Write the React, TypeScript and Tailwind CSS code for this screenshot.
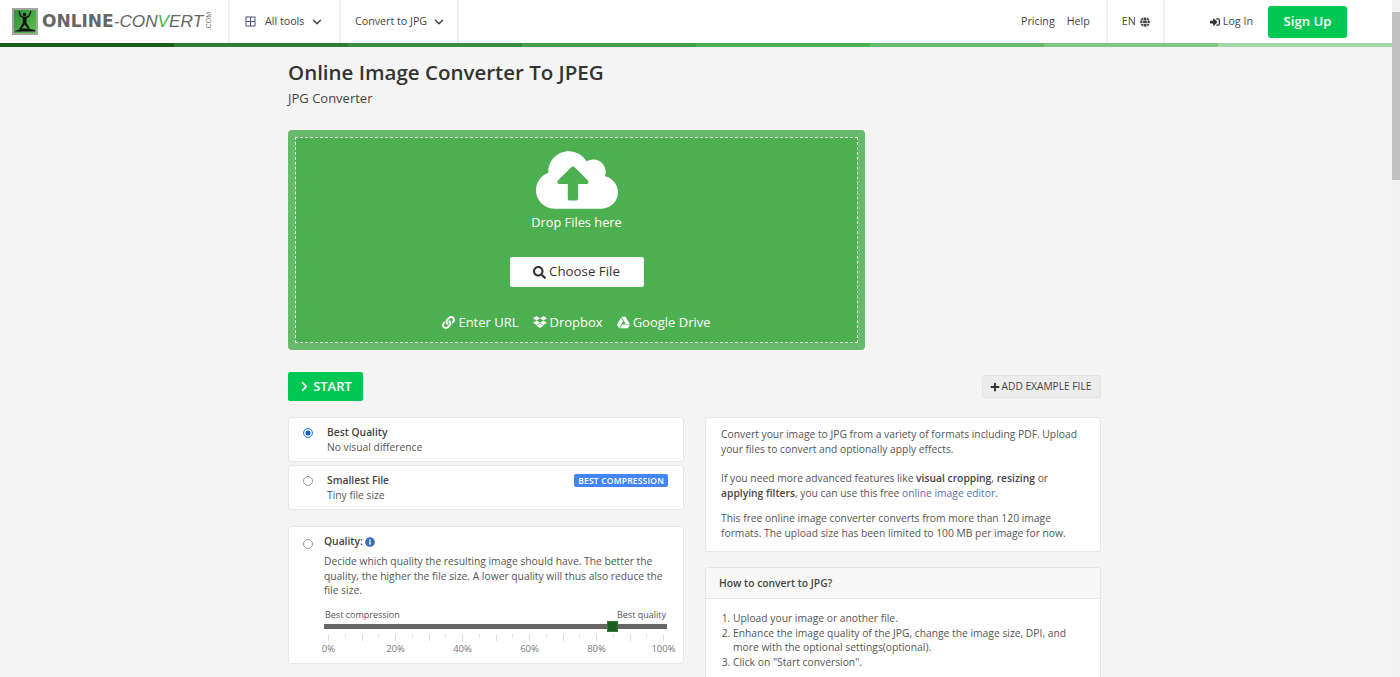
import React from 'react';
import { ChevronDown } from 'lucide-react';
import {
  FaCloudUploadAlt,
  FaSearch,
  FaLink,
  FaDropbox,
  FaGoogleDrive,
  FaChevronRight,
  FaPlus,
  FaInfoCircle,
  FaGlobe,
  FaSignInAlt,
} from 'react-icons/fa';

const barColors = ['bg-[#1b5e20]', 'bg-[#2e7d32]', 'bg-[#388e3c]', 'bg-[#43a047]', 'bg-[#4caf50]', 'bg-[#66bb6a]', 'bg-[#81c784]', 'bg-[#a5d6a7]'];
const ticks = Array.from({ length: 21 }, (_, i) => i);
const tickLabels = ['0%', '20%', '40%', '60%', '80%', '100%'];

const Logo = () => (
  <div className="flex items-center pl-[12px] w-[228px] h-full">
    <svg width="26" height="27" viewBox="0 0 26 27" className="shrink-0">
      <defs>
        <linearGradient id="logoGreen" x1="0" y1="0" x2="1" y2="1">
          <stop offset="0" stopColor="#2f8f3a" />
          <stop offset="1" stopColor="#5cc24a" />
        </linearGradient>
      </defs>
      <rect width="26" height="27" fill="#a3a3a3" />
      <rect x="2" y="2" width="22" height="23" fill="url(#logoGreen)" />
      <circle cx="12.5" cy="6.5" r="1.7" fill="#111" />
      <path d="M7 3l1.5 5 3 1.5h2.5L17 8l2-5" fill="none" stroke="#111" strokeWidth="1.4" />
      <path d="M10.8 9h4l-.4 6 3.6 5.5h-2.2l-3-4-3.4 4.500H7l3.800-6z" fill="#111" />
      <path d="M3 23l7-2.500h6l7 1.500v1.500H3z" fill="#111" />
    </svg>
    <span className="ml-[4px] font-['DejaVu_Sans',sans-serif] font-bold text-[17px] text-[#666] leading-none">ONLINE</span>
    <span className="font-['Liberation_Sans',sans-serif] italic text-[17.2px] text-[#666] leading-none">
      -CON<span className="text-[#3fb34f]">V</span>ERT
    </span>
    <span className="[writing-mode:vertical-rl] rotate-180 text-[7px] leading-none text-[#777] font-['Liberation_Sans',sans-serif] ml-[2px]">.COM</span>
  </div>
);

const Header = () => (
  <header className="bg-white h-[43px] flex items-stretch text-[#444] text-[10.7px]">
    <Logo />
    <div className="w-[111px] border-l-2 border-[#f0f0f0] flex items-center pl-[15px]">
      <svg width="11" height="11" viewBox="0 0 11 11" fill="none" stroke="#4a5578" strokeWidth="1" className="mr-[9px]">
        <rect x="1" y="1" width="9" height="9" />
        <path d="M5.5 1v9M1 5.5h9" />
      </svg>
      <span>All tools</span>
      <ChevronDown size={14} strokeWidth={2.5} className="ml-[6px] text-[#444]" />
    </div>
    <div className="w-[120px] border-l-2 border-r-2 border-[#f0f0f0] flex items-center pl-[14px]">
      <span>Convert to JPG</span>
      <ChevronDown size={14} strokeWidth={2.5} className="ml-[5px] text-[#444]" />
    </div>
    <div className="flex-1 flex items-center justify-end gap-[12px] pr-[16px]">
      <span>Pricing</span>
      <span>Help</span>
    </div>
    <div className="w-[59px] border-l-2 border-r-2 border-[#f0f0f0] flex items-center pl-[14px] gap-[4px]">
      <span>EN</span>
      <FaGlobe size={10} className="text-[#444]" />
    </div>
    <div className="w-[45px]" />
    <div className="flex items-center gap-[3px]">
      <FaSignInAlt size={10} className="text-[#333]" />
      <span>Log In</span>
    </div>
    <div className="flex items-center pl-[15px] pr-[45px]">
      <button className="w-[79px] h-[32px] bg-[#00c853] rounded-[3px] text-white text-[13.2px] font-semibold">Sign Up</button>
    </div>
  </header>
);

const Dropzone = () => (
  <div className="mt-[23px] w-[577px] h-[220px] bg-[#66bb6a] rounded-[4px] p-[7px]">
    <div className="h-full bg-[#4caf50] border border-dashed border-white flex flex-col items-center text-white">
      <FaCloudUploadAlt size={82} className="mt-[1px]" />
      <div className="mt-[-7px] text-[12.8px] leading-[17px]">Drop Files here</div>
      <button className="mt-[26px] w-[134px] h-[30px] bg-white rounded-[2px] text-[#333] text-[13.3px] flex items-center justify-center gap-[3px]">
        <FaSearch size={13} />
        Choose File
      </button>
      <div className="mt-[26px] flex items-center gap-[14px] text-[13px] leading-[18px]">
        <span className="flex items-center gap-[3px]"><FaLink size={13} />Enter URL</span>
        <span className="flex items-center gap-[3px]"><FaDropbox size={14} />Dropbox</span>
        <span className="flex items-center gap-[3px]"><FaGoogleDrive size={13} />Google Drive</span>
      </div>
    </div>
  </div>
);

const Radio = ({ checked = false }: { checked?: boolean }) => (
  <input
    type="radio"
    defaultChecked={checked}
    className="block appearance-none w-[10px] h-[10px] m-0 rounded-full border border-[#999] bg-white checked:border-[#3b82f6] checked:bg-[#0060df] checked:shadow-[inset_0_0_0_1.5px_white] shrink-0"
  />
);

const OptionCard = ({ title, sub, checked, badge }: { title: string; sub: string; checked?: boolean; badge?: string }) => (
  <div className="h-[45px] bg-white border border-[#e6e6e6] rounded-[3px] flex pl-[14px] pr-[15px] pt-[7px]">
    <div className="pt-[3px] w-[24px]"><Radio checked={checked} /></div>
    <div className="flex-1 leading-[14.5px]">
      <div className="font-semibold text-[#444]">{title}</div>
      <div className="text-[#555]">{sub}</div>
    </div>
    {badge && (
      <div className="self-start mt-[1px] h-[13px] px-[4px] bg-[#4285f4] rounded-[2px] text-white text-[8.5px] font-semibold leading-[13px] tracking-[0.2px]">{badge}</div>
    )}
  </div>
);

const QualityCard = () => (
  <div className="mt-[16px] h-[138px] bg-white border border-[#e6e6e6] rounded-[3px] flex pl-[14px] pr-[16px] pt-[7px]">
    <div className="pt-[5px] w-[21px]"><Radio /></div>
    <div className="flex-1">
      <div className="flex items-center gap-[2px] leading-[15px] font-semibold text-[#444]">
        Quality:
        <FaInfoCircle size={10} className="text-[#3b6fb5]" />
      </div>
      <p className="mt-[5px] leading-[14.5px] text-[#555]">
        Decide which quality the resulting image should have. The better the quality, the higher the file size. A lower quality will thus also reduce the file size.
      </p>
      <div className="mt-[11px] flex justify-between px-[1px] text-[9px] leading-[12px] text-[#555] font-medium">
        <span>Best compression</span>
        <span>Best quality</span>
      </div>
      <div className="relative mt-[3px] h-[5px] bg-[#666]">
        <div className="absolute left-[283px] top-[-3px] w-[11px] h-[11px] bg-[#1b5e20] border border-[#2e7d32]" />
      </div>
      <div className="mt-[5px] mx-[4px] mr-[3px] flex justify-between items-start h-[7px]">
        {ticks.map((i) => (
          <div key={i} className={i % 2 === 0 ? 'w-px h-[7px] bg-[#ddd]' : 'w-px h-[3px] bg-[#ddd]'} />
        ))}
      </div>
      <div className="mt-[2px] mx-[4px] mr-[3px] flex justify-between text-[9.5px] leading-[12px] text-[#777]">
        {tickLabels.map((l) => (
          <div key={l} className="w-px flex justify-center whitespace-nowrap">{l}</div>
        ))}
      </div>
    </div>
  </div>
);

const InfoCard = () => (
  <div className="h-[135px] bg-white border border-[#e6e6e6] rounded-[3px] pl-[15px] pr-[15px] pt-[9px] text-[#555] leading-[14.5px]">
    <p>Convert your image to JPG from a variety of formats including PDF. Upload your files to convert and optionally apply effects.</p>
    <p className="mt-[15px]">
      If you need more advanced features like <b className="font-semibold text-[#444]">visual cropping</b>, <b className="font-semibold text-[#444]">resizing</b> or <b className="font-semibold text-[#444]">applying filters</b>, you can use this free <span className="text-[#5c6fb1]">online image editor</span>.
    </p>
    <p className="mt-[11px]">This free online image converter converts from more than 120 image formats. The upload size has been limited to 100 MB per image for now.</p>
  </div>
);

const HowToCard = () => (
  <div className="mt-[15px] bg-white border border-[#e6e6e6] rounded-[3px] text-[#555] leading-[14.5px]">
    <div className="h-[31px] bg-[#f7f7f7] border-b border-[#e6e6e6] pl-[13px] flex items-center font-semibold text-[#444]">How to convert to JPG?</div>
    <ol className="list-decimal pl-[27px] pr-[15px] pt-[12px] pb-[14px]">
      <li>Upload your image or another file.</li>
      <li>Enhance the image quality of the JPG, change the image size, DPI, and more with the optional settings(optional).</li>
      <li>Click on "Start conversion".</li>
    </ol>
  </div>
);

export default function App() {
  return (
    <div className="h-screen overflow-hidden flex bg-[#f4f4f4] font-['Open_Sans',sans-serif]">
      <div className="flex-1 min-w-0">
        <Header />
        <div className="flex h-[4px]">
          {barColors.map((c) => (
            <div key={c} className={`flex-1 ${c}`} />
          ))}
        </div>
        <main className="ml-[288px] w-[813px] text-[10.3px]">
          <h1 className="pt-[12px] text-[20.5px] leading-[27px] font-semibold text-[#333]">Online Image Converter To JPEG</h1>
          <h2 className="mt-[3px] text-[13px] leading-[18px] text-[#444]">JPG Converter</h2>
          <Dropzone />
          <div className="mt-[22px] flex items-center justify-between">
            <button className="w-[75px] h-[29px] bg-[#00c853] rounded-[2px] text-white text-[13px] font-semibold flex items-center justify-center gap-[3px]">
              <FaChevronRight size={11} />
              START
            </button>
            <button className="w-[119px] h-[23px] pr-[2px] bg-[#ececec] border border-[#e4e4e4] rounded-[2px] text-[#444] text-[10.2px] flex items-center justify-center gap-[2px]">
              <FaPlus size={10} className="text-[#333]" />
              ADD EXAMPLE FILE
            </button>
          </div>
          <div className="mt-[16px] grid grid-cols-[396px_396px] gap-x-[21px] items-start">
            <div className="flex flex-col">
              <OptionCard title="Best Quality" sub="No visual difference" checked />
              <div className="h-[3px]" />
              <OptionCard title="Smallest File" sub="Tiny file size" badge="BEST COMPRESSION" />
              <QualityCard />
            </div>
            <div className="flex flex-col">
              <InfoCard />
              <HowToCard />
            </div>
          </div>
        </main>
      </div>
      <div className="w-[8px] shrink-0 bg-[#f1f1f1] flex flex-col">
        <div className="h-[12px]" />
        <div className="h-[168px] bg-[#c1c1c1]" />
      </div>
    </div>
  );
}
